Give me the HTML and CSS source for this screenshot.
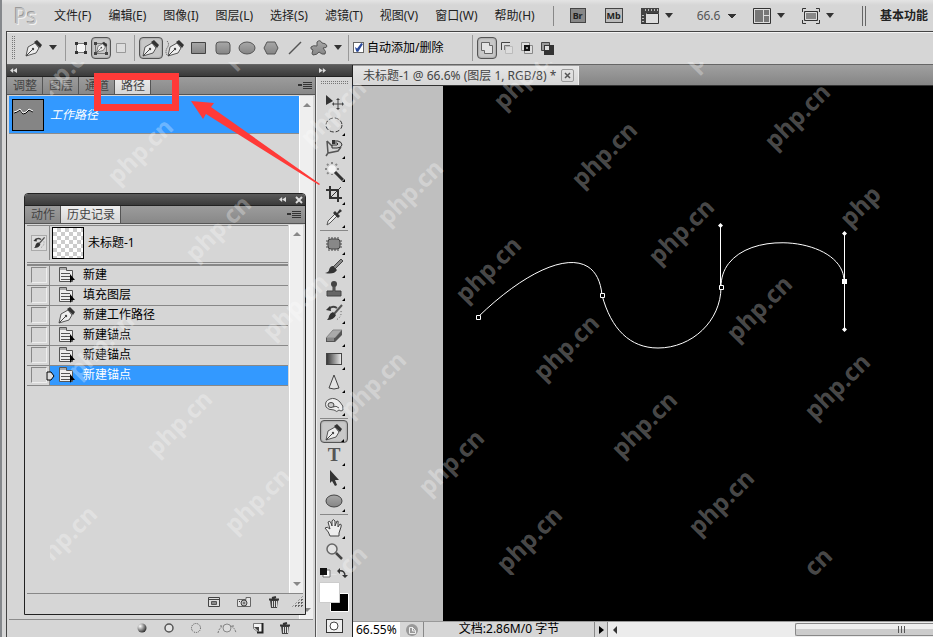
FILE: index.html
```html
<!DOCTYPE html>
<html lang="zh-CN">
<head>
    <meta charset="UTF-8">
    <meta name="viewport" content="width=device-width, initial-scale=1.0">
    <title>未标题-1</title>
    <link rel="stylesheet" href="styles.css">
</head>
<body>
    <!-- Shared icons -->
    <svg class="defs" aria-hidden="true">
        <defs>
            <linearGradient id="metal" x1="0" y1="0" x2="0" y2="1">
                <stop offset="0" stop-color="#a8a8a8"/>
                <stop offset="1" stop-color="#858585"/>
            </linearGradient>
            <linearGradient id="fade" x1="0" y1="0" x2="1" y2="0">
                <stop offset="0" stop-color="#333"/>
                <stop offset="1" stop-color="#eee"/>
            </linearGradient>
            <radialGradient id="ball" cx="0.3" cy="0.3" r="0.8">
                <stop offset="0" stop-color="#fff"/>
                <stop offset="1" stop-color="#222"/>
            </radialGradient>
        </defs>
        <symbol id="pen" viewBox="0 0 18 18">
            <path d="M1 17 L3 8 L10 4 L14 9 L11 14 Z" fill="#eee" stroke="#555"/>
            <path d="M1 17 L7 11" stroke="#444" fill="none"/>
            <circle cx="8" cy="10" r="1.2" fill="#444"/>
            <path d="M9 3 L12 1 L17 6 L15 9 Z" fill="#333"/>
        </symbol>
        <symbol id="brush" viewBox="0 0 20 20">
            <path d="M17 2 L19 4 L11 12 L9 10 Z" fill="#888" stroke="#444"/>
            <path d="M9 9 L13 13 Q10 18 1 16 Q5 15 5 13 Q6 9 9 9 Z" fill="#333"/>
        </symbol>
        <symbol id="history-brush" viewBox="0 0 20 20">
            <path d="M18 2 L10 11" stroke="#555" stroke-width="2"/>
            <path d="M9 9 L12 12 Q10 17 3 17 Q5 15 5 13 Q6 10 9 9 Z" fill="#333"/>
            <path d="M5 6 Q8 2 13 5" stroke="#444" stroke-width="2" fill="none"/>
            <path d="M2 7 L6 3 L7 8 Z" fill="#333"/>
            <path d="M17 8 Q18 14 12 17" stroke="#555" stroke-dasharray="1 2" fill="none"/>
        </symbol>
        <symbol id="state" viewBox="0 0 18 18">
            <path d="M1.500 1.500 H8.500 V4.500 H14.500 V15.500 H1.500 Z" fill="#eee" stroke="#555"/>
            <path d="M2 2 H8 V4 H2 Z" fill="#aaa"/>
            <path d="M3 7.500 H12 M3 10.500 H12 M3 13.500 H12" stroke="#555"/>
            <path d="M12 8 L17 14 L14 14 L12 17 Z" fill="#000"/>
        </symbol>
        <symbol id="trash" viewBox="0 0 12 12">
            <path d="M2 4 H10 L9 12 H3 Z" fill="#444"/>
            <path d="M4.500 5 V11 M6.500 5 V11 M8.500 5 V11" stroke="#ddd"/>
            <path d="M1 3.500 H11 M4 2 L8 1" stroke="#333" stroke-width="2"/>
        </symbol>
    </svg>

    <div class="app">
        <header class="menubar">
            <div class="logo">Ps</div>
            <nav class="menus">
                <button>文件(F)</button>
                <button>编辑(E)</button>
                <button>图像(I)</button>
                <button>图层(L)</button>
                <button>选择(S)</button>
                <button>滤镜(T)</button>
                <button>视图(V)</button>
                <button>窗口(W)</button>
                <button>帮助(H)</button>
            </nav>
            <div class="app-buttons">
                <button class="bridge">Br</button>
                <button class="mini">Mb</button>
                <button class="drop" aria-label="查看额外内容">
                    <svg width="18" height="16"><path d="M0 0 H18 V5 H5 V16 H0 Z" fill="#444"/><path d="M5.500 5.500 H17.500 V15.500 H1" fill="#ddd" stroke="#333"/><path d="M0 15 V5 H5 V15 Z" fill="#444"/><path d="M4.500 1 V3 M7.500 1 V3 M10.500 1 V3 M13.500 1 V3 M16.500 1 V3 M1 7.500 H3 M1 10.500 H3 M1 13.500 H3" stroke="#bbb"/></svg>
                </button>
                <select class="zoom-level" aria-label="缩放级别"><option>66.6</option></select>
                <button class="drop" aria-label="排列文档">
                    <svg width="18" height="16"><path d="M.5 .5 H17.500 V15.500 H.5 Z" fill="#ddd" stroke="#333"/><path d="M2 2 H10 V14 H2 Z M11 2 H16 V7 H11 Z M11 8 H16 V14 H11 Z" fill="#777"/></svg>
                </button>
                <button class="drop" aria-label="屏幕模式">
                    <svg width="18" height="16"><path d="M.5 4 V.5 H4 M14 .5 H17.500 V4 M17.500 12 V15.500 H14 M4 15.500 H.5 V12" fill="none" stroke="#333"/><path d="M2.500 3.500 H15.500 V12.500 H2.500 Z" fill="#888" stroke="#333"/><path d="M3.500 4.500 H14.500 V11.500 H3.500 Z" fill="none" stroke="#ddd"/></svg>
                </button>
            </div>
            <button class="workspace-name">基本功能</button>
        </header>

        <div class="frame">
            <div class="options">
                <span class="grip"></span>
                <button class="current-tool drop" aria-label="钢笔工具"><svg width="18" height="18"><use href="#pen"/></svg></button>
                <div class="modes">
                    <button aria-label="形状图层"><svg width="14" height="14"><path d="M2.500 2.500 H11.500 V11.500 H2.500 Z" fill="#f4f4f4" stroke="#777"/><path d="M1 1 H4 V4 H1 Z M10 1 H13 V4 H10 Z M1 10 H4 V13 H1 Z M10 10 H13 V13 H10 Z" fill="#333"/></svg></button>
                    <button class="on" aria-label="路径"><svg width="16" height="16"><path d="M2.500 3.500 H13.500 V13.500 H2.500 Z" fill="none" stroke="#777"/><path d="M1 2 H4 V5 H1 Z M1 12 H4 V15 H1 Z M12 12 H15 V15 H12 Z" fill="#444"/><use href="#pen" x="3" y="1" width="12" height="12"/></svg></button>
                    <button aria-label="填充像素"><svg width="12" height="12"><path d="M1.500 1.500 H10.500 V10.500 H1.500 Z" fill="#ddd" stroke="#999"/></svg></button>
                </div>
                <div class="shapes">
                    <button class="on" aria-label="钢笔"><svg width="18" height="18"><use href="#pen"/></svg></button>
                    <button aria-label="自由钢笔"><svg width="20" height="18"><use href="#pen" x="2" width="18" height="18"/><path d="M2 2 Q5 5 2 9 Q0 13 2 16" fill="none" stroke="#444" stroke-dasharray="1 1"/></svg></button>
                    <button aria-label="矩形"><svg width="16" height="16"><path d="M.5 2.500 H14.500 V13.500 H.5 Z" fill="url(#metal)" stroke="#444"/></svg></button>
                    <button aria-label="圆角矩形"><svg width="16" height="16"><rect x="1" y="2" width="14" height="12" rx="3" fill="url(#metal)" stroke="#555"/></svg></button>
                    <button aria-label="椭圆"><svg width="18" height="16"><ellipse cx="9" cy="8" rx="8" ry="6" fill="url(#metal)" stroke="#555"/></svg></button>
                    <button aria-label="多边形"><svg width="16" height="16"><path d="M4 2 H12 L15 8 L12 14 H4 L1 8 Z" fill="url(#metal)" stroke="#555"/></svg></button>
                    <button aria-label="直线"><svg width="16" height="16"><path d="M2 14 L14 2" stroke="#555" stroke-width="1.500"/></svg></button>
                    <button aria-label="自定形状"><svg width="20" height="18"><path d="M8 3 Q11 0 13 4 Q17 4 18 7 Q18 9 14 9 Q18 13 16 15 Q13 16 10 13 Q8 16 4 16 Q2 15 4 11 Q1 10 2 8 Q4 6 8 7 Z" fill="url(#metal)" stroke="#555"/></svg></button>
                    <i class="caret"></i>
                </div>
                <label class="auto"><input type="checkbox" checked> 自动添加/删除</label>
                <div class="modes combine">
                    <button class="on" aria-label="添加到路径区域"><svg width="14" height="14"><path d="M1.500 1.500 H9.500 V4.500 H12.500 V12.500 H4.500 V9.500 H1.500 Z" fill="#e4e4e4" stroke="#666"/></svg></button>
                    <button aria-label="从路径区域减去"><svg width="14" height="14"><path d="M1 9 V1 H10 V4 H5 V9 Z" fill="#ddd"/><path d="M1.500 9 V1.500 H10" fill="none" stroke="#444"/><path d="M4.500 9 V4.500 H10" fill="none" stroke="#777"/><path d="M5.500 5.500 H12.500 V12.500 H5.500 Z" fill="#ddd" stroke="#bbb"/></svg></button>
                    <button aria-label="交叉路径区域"><svg width="14" height="14"><path d="M1.500 1.500 H9.500 V9.500 H1.500 Z M4.500 4.500 H12.500 V12.500 H4.500 Z" fill="#ddd" stroke="#888"/><path d="M4 4 H10 V10 H4 Z" fill="#111"/><path d="M6 6 H8 V8 H6 Z" fill="#999"/></svg></button>
                    <button aria-label="重叠路径区域除外"><svg width="14" height="14"><path d="M1.500 1.500 H9.500 V9.500 H1.500 Z" fill="#999" stroke="#444"/><path d="M4 4 H14 V14 H4 Z" fill="#333"/><path d="M5 5 H9 V9 H5 Z" fill="#ddd"/></svg></button>
                </div>
            </div>

            <div class="workspace">
                <div class="docks">
                    <div class="dock-head"><span class="collapse left"></span><span class="collapse right"></span></div>
                    <div class="dock-body">
                        <section class="panel">
                            <div class="tabs">
                                <button>调整</button>
                                <button>图层</button>
                                <button>通道</button>
                                <button class="active">路径</button>
                                <i class="panel-menu"></i>
                            </div>
                            <div class="panel-body">
                                <div class="paths">
                                    <div class="path-row">
                                        <svg class="path-thumb" width="32" height="32"><path d="M1 12 L4 11 L7 9 L10 13 L13 12 L16 9 L20 11" transform="translate(0 1)" fill="none" stroke="#000"/><path d="M1 12 L4 11 L7 9 L10 13 L13 12 L16 9 L20 11" fill="none" stroke="#fff"/></svg>
                                        <em>工作路径</em>
                                    </div>
                                </div>
                                <div class="scroll"><i class="up"></i><i class="down"></i></div>
                            </div>
                            <footer class="path-actions">
                                <button aria-label="用前景色填充路径"><svg width="12" height="12"><circle cx="6" cy="6" r="4.500" fill="url(#ball)"/></svg></button>
                                <button aria-label="用画笔描边路径"><svg width="12" height="12"><circle cx="6" cy="6" r="4" fill="#e4e4e4" stroke="#555" stroke-width="1.500"/></svg></button>
                                <button aria-label="将路径作为选区载入"><svg width="12" height="12"><circle cx="6" cy="6" r="4.500" fill="none" stroke="#555" stroke-dasharray="1 1"/></svg></button>
                                <button aria-label="从选区生成工作路径"><svg width="20" height="12"><path d="M1 11 Q2 6 6 4 M14 4 Q18 6 19 11 M3 4 H17" fill="none" stroke="#777" stroke-dasharray="2 1"/><circle cx="10" cy="6" r="4" fill="#ddd" stroke="#888"/></svg></button>
                                <button aria-label="创建新路径"><svg width="12" height="12"><path d="M1.500 1.500 H10.500 V10.500 H6.500 L1.500 6.500 Z" fill="#f4f4f4" stroke="#777"/><path d="M10.500 1 V10.500 H5" fill="none" stroke="#222" stroke-width="2"/><path d="M2 5 H7 V10 Z" fill="#444"/></svg></button>
                                <button aria-label="删除路径"><svg width="12" height="12"><use href="#trash"/></svg></button>
                            </footer>
                        </section>

                        <aside class="toolbox">
                            <span class="tool-grip"></span>
                            <div class="tools">
                                <button class="single" aria-label="移动"><svg width="20" height="20"><path d="M2 3 L9 9 L2 13 Z" fill="#333"/><path d="M14 7 V17 M9 12 H19" stroke="#444"/><path d="M14 6 L16 8 H12 Z M14 18 L12 16 H16 Z M8 12 L10 10 V14 Z M20 12 L18 10 V14 Z" fill="#444"/></svg></button>
                                <button aria-label="椭圆选框"><svg width="20" height="20"><ellipse cx="10" cy="10" rx="8" ry="7" fill="none" stroke="#333" stroke-dasharray="4 2"/></svg></button>
                                <button aria-label="磁性套索"><svg width="20" height="20"><path d="M3 3 L8 8 M3 3 L4 15 L14 13 L17 9 M4 15 L2 18" fill="none" stroke="#555" stroke-width="1.500"/><path d="M9 3 H14 Q18 4 18 7 Q17 10 13 10 H8 V7 H13 Q15 6 13 5 H9 Z" fill="#ccc" stroke="#333"/><path d="M8 2 H11 V6 H8 Z" fill="#333"/></svg></button>
                                <button aria-label="魔棒"><svg width="20" height="20"><path d="M8 1 V14 M1 8 H15 M3 3 L13 13 M13 3 L3 13" stroke="#888" stroke-width="2" stroke-dasharray="2 1"/><circle cx="8" cy="8" r="4" fill="#f4f4f4"/><path d="M11 11 L19 19" stroke="#333" stroke-width="3"/></svg></button>
                                <button aria-label="裁剪"><svg width="20" height="20"><path d="M6 2 V14 H18 M2 6 H14 V18" fill="none" stroke="#333" stroke-width="2"/><path d="M7 13 L17 3" stroke="#333"/></svg></button>
                                <button aria-label="吸管"><svg width="20" height="20"><path d="M3 18 L4 14 L11 7 L13 9 L6 16 Z" fill="#eee" stroke="#555"/><path d="M9 6 L14 11 L16 9 L14 7 L18 4 L16 2 L13 6 L11 4 Z" fill="#333"/></svg></button>
                                <hr>
                                <button aria-label="污点修复画笔"><svg width="20" height="20"><path d="M5 3 V17 M8 3 V17 M11 3 V17 M14 3 V17 M2 7 H18 M2 10 H18 M2 13 H18" stroke="#444"/><rect x="4" y="5" width="12" height="10" rx="3" fill="#888" stroke="#444"/></svg></button>
                                <button aria-label="画笔"><svg width="20" height="20"><use href="#brush"/></svg></button>
                                <button aria-label="仿制图章"><svg width="20" height="20"><circle cx="10" cy="4" r="3" fill="#444"/><path d="M9 6 H11 V11 H17 V16 H3 V11 H9 Z" fill="#666" stroke="#444"/></svg></button>
                                <button aria-label="历史记录画笔"><svg width="20" height="20"><use href="#history-brush"/></svg></button>
                                <button aria-label="橡皮擦"><svg width="20" height="20"><path d="M2 12 L9 4 H18 L11 12 Z" fill="#aaa" stroke="#888"/><path d="M2 12 H11 L18 4 V9 L11 16 H2 Z" fill="#555"/><path d="M3 12 H10 V15 H3 Z" fill="#888"/></svg></button>
                                <button aria-label="渐变"><svg width="20" height="20"><rect x="2.500" y="4.500" width="15" height="11" fill="url(#fade)" stroke="#444"/></svg></button>
                                <button aria-label="锐化"><svg width="20" height="20"><path d="M10 3 L15 16 Q10 18 5 16 Z" fill="#e4e4e4" stroke="#444"/></svg></button>
                                <button aria-label="减淡"><svg width="20" height="20"><path d="M6 4 Q11 2 16 7 Q20 11 19 15 Q17 17 15 15 Q13 18 10 15 Q4 15 2 12 Q0 6 6 4 Z" fill="#eee" stroke="#555"/><ellipse cx="7" cy="10" rx="3" ry="2.500" fill="#ccc" stroke="#444"/><path d="M9 12 Q12 10 15 13" fill="none" stroke="#555"/></svg></button>
                                <hr>
                                <button class="on" aria-label="钢笔"><svg width="18" height="18"><use href="#pen"/></svg></button>
                                <button class="type" aria-label="文字">T</button>
                                <button aria-label="路径选择"><svg width="20" height="20"><path d="M6 2 L15 12 H11 L13 17 L11 18 L8 13 L6 15 Z" fill="#333"/></svg></button>
                                <button aria-label="椭圆"><svg width="20" height="20"><ellipse cx="10" cy="10" rx="8" ry="6" fill="url(#metal)" stroke="#444"/></svg></button>
                                <hr>
                                <button aria-label="抓手"><svg width="20" height="20"><path d="M6 18 Q5 14 1 10 Q3 8 6 11 L4 4 Q6 2 7 5 L8 8 V3 Q9 0 11 3 V8 L13 3 Q15 3 14 5 L14 9 L16 6 Q18 6 17 9 L15 15 V18 Z" fill="#eee" stroke="#444"/></svg></button>
                                <button class="single" aria-label="缩放"><svg width="20" height="20"><circle cx="8" cy="8" r="5" fill="#e4e4e4" stroke="#666" stroke-width="1.500"/><path d="M12 12 L18 18" stroke="#444" stroke-width="2.500"/></svg></button>
                            </div>
                            <svg class="swatches" width="30" height="47">
                                <path d="M4 3 H11 V10 H4 Z" fill="#fff" stroke="#777"/><path d="M1 1 H8 V8 H1 Z" fill="#111"/>
                                <path d="M20 4 Q26 3 26 9" fill="none" stroke="#333" stroke-width="1.500"/><path d="M18 4 L21 1 V7 Z M23 8 H29 L26 11 Z" fill="#333"/>
                                <path d="M11.500 26.500 H29.500 V44.500 H11.500 Z" fill="#000" stroke="#fff"/>
                                <path d="M.5 15.500 H20.500 V35.500 H.5 Z" fill="#fff" stroke="#ccc"/>
                            </svg>
                            <button class="quick-mask" aria-label="快速蒙版"><svg width="12" height="12"><circle cx="6" cy="6" r="4" fill="#fff" stroke="#444"/></svg></button>
                        </aside>
                    </div>
                </div>

                <main class="document">
                    <div class="doc-tabs">
                        <div class="doc-tab">未标题-1 @ 66.6% (图层 1, RGB/8) * <button class="doc-close" aria-label="关闭"><svg width="11" height="11"><path d="M3 3 L8 8 M8 3 L3 8" stroke="#555" stroke-width="1.500"/></svg></button></div>
                    </div>
                    <div class="pasteboard">
                        <svg class="canvas">
                            <g fill="none" stroke="#fff">
                                <path d="M35 231 C97 171 154 156 159 209 C168 243 187 262 215 262 C249 262 278 235 278 201 C278 139 401 147 401 195"/>
                                <path d="M277.500 140 V201 M401.500 148 V243"/>
                                <path d="M33.500 229.500 h4 v4 h-4 Z M157.500 207.500 h4 v4 h-4 Z M276.500 199.500 h4 v4 h-4 Z" fill="#000"/>
                            </g>
                            <path d="M399 193 h5 v5 h-5 Z M277.500 137 l2.500 2.500 l-2.500 2.500 l-2.500 -2.500 Z M401.500 145 l2.500 2.500 l-2.500 2.500 l-2.500 -2.500 Z M401.500 241 l2.500 2.500 l-2.500 2.500 l-2.500 -2.500 Z" fill="#fff"/>
                        </svg>
                    </div>
                    <div class="status">
                        <input class="status-zoom" type="text" value="66.55%" aria-label="缩放">
                        <span class="status-icon"><svg width="14" height="14"><circle cx="7" cy="7" r="6" fill="#999"/><path d="M4.500 4.500 H7.500 L10.500 7.500 V10.500 H4.500 Z M7.500 4 V8 H10" fill="none" stroke="#eee"/></svg></span>
                        <span class="status-text">文档:2.86M/0 字节</span>
                        <button class="status-more" aria-label="更多"></button>
                        <div class="hscroll"><i></i><span class="thumb"></span></div>
                    </div>
                </main>
            </div>
        </div>
    </div>

    <!-- Floating history panel -->
    <section class="history">
        <div class="history-head"><span class="collapse"></span><button aria-label="关闭"><svg width="8" height="8"><path d="M1 1 L7 7 M7 1 L1 7" stroke="#ddd" stroke-width="2"/></svg></button></div>
        <div class="tabs">
            <button>动作</button>
            <button class="active">历史记录</button>
            <i class="panel-menu"></i>
        </div>
        <div class="history-body">
            <div class="history-list">
                <div class="snapshot">
                    <span class="source"><svg width="16" height="16"><use href="#history-brush"/></svg></span>
                    <span class="snapshot-thumb"></span>
                    <span>未标题-1</span>
                </div>
                <ul class="states">
                    <li><span class="box"></span><button><svg width="18" height="18"><use href="#state"/></svg>新建</button></li>
                    <li><span class="box"></span><button><svg width="18" height="18"><use href="#state"/></svg>填充图层</button></li>
                    <li><span class="box"></span><button><svg width="18" height="18"><use href="#pen"/></svg>新建工作路径</button></li>
                    <li><span class="box"></span><button><svg width="18" height="18"><use href="#state"/></svg>新建锚点</button></li>
                    <li><span class="box"></span><button><svg width="18" height="18"><use href="#state"/></svg>新建锚点</button></li>
                    <li class="selected"><span class="box"></span><button><svg width="18" height="18"><use href="#state"/></svg>新建锚点</button><svg class="marker" width="9" height="10"><path d="M1 1 H5 L8 5 L5 9 H1 Z" fill="#ddd" stroke="#000"/></svg></li>
                </ul>
            </div>
            <div class="scroll"><i class="up"></i><i class="down"></i></div>
        </div>
        <footer class="history-actions">
            <button aria-label="从当前状态创建新文档"><svg width="12" height="12"><path d="M.5 1.500 H11.500 V10.500 H.5 Z" fill="#ddd" stroke="#444"/><path d="M1 3.500 H11" stroke="#444"/><path d="M3.500 5.500 H8.500 V8.500 H3.500 Z" fill="#888" stroke="#555"/></svg></button>
            <button aria-label="创建新快照"><svg width="14" height="12"><path d="M.5 3.500 H9 V1.500 H13.500 V10.500 H.5 Z" fill="#e4e4e4" stroke="#666"/><circle cx="7" cy="7" r="3" fill="#bbb" stroke="#444"/><path d="M2 5.500 H3 M7 6 V8" stroke="#333"/></svg></button>
            <button aria-label="删除"><svg width="12" height="12"><use href="#trash"/></svg></button>
            <span class="resize"></span>
        </footer>
    </section>

    <!-- Red callout -->
    <div class="callout"></div>
    <svg class="overlay" aria-hidden="true">
        <path d="M191 101 L214 103 L211 107 L320 184 L319 185 L206 114 L203 119 Z" fill="#ff3a38"/>
    </svg>

    <svg class="overlay watermark" aria-hidden="true">
        <g>
            <text transform="translate(64 75) rotate(-45)" y="6">php.cn</text>
            <text transform="translate(142 153) rotate(-45)" y="6">php.cn</text>
            <text transform="translate(220 230) rotate(-45)" y="6">php.cn</text>
            <text transform="translate(297 308) rotate(-45)" y="6">php.cn</text>
            <text transform="translate(375 386) rotate(-45)" y="6">php.cn</text>
            <text transform="translate(453 464) rotate(-45)" y="6">php.cn</text>
            <text transform="translate(531 541) rotate(-45)" y="6">php.cn</text>
            <text transform="translate(257 36) rotate(-45)" y="6">php.cn</text>
            <text transform="translate(335 114) rotate(-45)" y="6">php.cn</text>
            <text transform="translate(412 194) rotate(-45)" y="6">php.cn</text>
            <text transform="translate(490 271) rotate(-45)" y="6">php.cn</text>
            <text transform="translate(568 349) rotate(-45)" y="6">php.cn</text>
            <text transform="translate(646 426) rotate(-45)" y="6">php.cn</text>
            <text transform="translate(723 504) rotate(-45)" y="6">php.cn</text>
            <text transform="translate(801 582) rotate(-45)" y="6">php.cn</text>
            <text transform="translate(528 78) rotate(-45)" y="6">php.cn</text>
            <text transform="translate(606 156) rotate(-45)" y="6">php.cn</text>
            <text transform="translate(683 233) rotate(-45)" y="6">php.cn</text>
            <text transform="translate(761 310) rotate(-45)" y="6">php.cn</text>
            <text transform="translate(839 388) rotate(-45)" y="6">php.cn</text>
            <text transform="translate(720 40) rotate(-45)" y="6">php.cn</text>
            <text transform="translate(799 118) rotate(-45)" y="6">php.cn</text>
            <text transform="translate(862 208) rotate(-45)" y="6">php</text>
            <text transform="translate(103 347) rotate(-45)" y="6">php.cn</text>
            <text transform="translate(181 425) rotate(-45)" y="6">php.cn</text>
            <text transform="translate(259 502) rotate(-45)" y="6">php.cn</text>
            <text transform="translate(336 580) rotate(-45)" y="6">php.cn</text>
            <text transform="translate(66 540) rotate(-45)" y="6">php.cn</text>
        </g>
    </svg>
</body>
</html>
```
FILE: styles.css
```css
:root {
    --face: #d6d6d6;
    --line: #8c8c8c;
    --blue: #3399ff;
    --red: #ff3a38;
}

* {
    box-sizing: border-box;
}

body {
    margin: 0;
    font-family: "Noto Sans", "Noto Sans CJK SC", sans-serif;
    font-size: 12px;
    line-height: 16px;
    color: #222;
    background: var(--face);
    overflow: hidden;
}

button, input, select {
    font: inherit;
    color: inherit;
    margin: 0;
    padding: 0;
    border: none;
    background: none;
}

svg {
    display: block;
    flex: none;
}

.defs {
    position: absolute;
    width: 0;
    height: 0;
}

.app {
    display: flex;
    flex-direction: column;
    height: 100vh;
    border-left: 2px solid #85888c;
}

/* Menu bar */
.menubar {
    display: flex;
    align-items: center;
    height: 31px;
    flex: none;
    padding: 0 5px 0 12px;
    background: linear-gradient(#e4e4e4, var(--face) 5px);
    white-space: nowrap;
}

.logo {
    width: 40px;
    font-family: "Open Sans", sans-serif;
    font-size: 21px;
    line-height: 28px;
    color: #c4c4c4;
    text-shadow: 1px 1px 0 #f2f2f2, -1px -1px 0 #999;
}

.menus {
    display: flex;
    gap: 17px;
}

.app-buttons {
    display: flex;
    align-items: center;
    height: 20px;
    margin-left: 18px;
    padding-left: 16px;
    border-left: 1px solid #888;
}

.bridge, .mini {
    width: 16px;
    height: 15px;
    border: 1px solid #444;
    background: #888;
    font-size: 9px;
    font-weight: bold;
    line-height: 12px;
}

.mini {
    width: 18px;
    margin: 0 18px 0 19px;
    background: #bbb;
}

.drop {
    display: flex;
    align-items: center;
    gap: 6px;
}

.drop::after, .caret {
    content: "";
    width: 0;
    border: 4px solid transparent;
    border-top: 5px solid #333;
    border-bottom: 0;
}

.zoom-level {
    width: 39px;
    margin: 0 17px 0 24px;
    appearance: none;
    color: #555;
    background:
        linear-gradient(to bottom left, #333 50%, transparent 50%) 31px 6px / 4px 5px no-repeat,
        linear-gradient(to bottom right, #333 50%, transparent 50%) 35px 6px / 4px 5px no-repeat;
}

.app-buttons .drop + .drop {
    margin-left: 17px;
}

.workspace-name {
    height: 20px;
    margin-left: auto;
    padding-left: 14px;
    border-left: 4px double #666;
    font-weight: bold;
}

/* Options bar */
.frame {
    display: flex;
    flex-direction: column;
    flex: 1;
    min-height: 0;
    margin-left: 4px;
    border-left: 1px solid #444;
    border-top: 1px solid #444;
}

.options {
    display: flex;
    align-items: center;
    height: 33px;
    flex: none;
    padding: 0 0 2px 4px;
    border-top: 1px solid #f4f4f4;
    border-bottom: 1px solid #666;
    white-space: nowrap;
}

.options button {
    height: 22px;
}

.grip {
    width: 4px;
    height: 23px;
    background: conic-gradient(#777 25%, transparent 0) 0 0 / 2px 2px;
}

.current-tool {
    margin-left: 10px;
    padding-right: 8px;
}

.modes, .shapes {
    display: flex;
    align-items: center;
    height: 26px;
    border-left: 1px solid #999;
    padding-left: 5px;
}

.modes button, .shapes button {
    display: flex;
    align-items: center;
    justify-content: center;
    width: 20px;
}

.modes {
    padding-right: 3px;
}

.shapes button {
    width: 24px;
}

.shapes {
    padding-left: 4px;
    padding-right: 6px;
}

.options .on, .tools .on {
    border: 1px solid #555;
    border-radius: 4px;
    background: #c8c8c8;
    box-shadow: inset 0 0 2px #777;
}

.caret {
    margin-left: 3px;
}

.auto {
    display: flex;
    align-items: center;
    gap: 3px;
    width: 124px;
    height: 26px;
    padding-left: 4px;
    border-left: 1px solid #999;
    color: #000;
}

.auto input {
    width: 11px;
    height: 11px;
    appearance: none;
    border: 1px solid #666;
    background: #fff;
}

.auto input:checked::before {
    content: "";
    display: block;
    width: 9px;
    height: 9px;
    background: #2a4a9c;
    clip-path: polygon(10% 45%, 35% 60%, 80% 0, 100% 10%, 45% 100%, 25% 95%);
}

.combine {
    padding-left: 4px;
}

/* Docks */
.workspace {
    display: flex;
    flex: 1;
    min-height: 0;
}

.docks {
    display: flex;
    flex-direction: column;
    flex: none;
    width: 346px;
    border-right: 1px solid #222;
}

.dock-head, .history-head {
    display: flex;
    align-items: center;
    height: 12px;
    flex: none;
    background: linear-gradient(#5a5a5a, #3a3a3a);
    border-bottom: 1px solid #222;
}

.collapse {
    width: 7px;
    height: 5px;
    background: #ddd;
    clip-path: polygon(0 50%, 45% 0, 45% 50%, 100% 0, 100% 100%, 45% 50%, 45% 100%);
}

.dock-head .left {
    margin-left: 3px;
}

.dock-head .right {
    margin-left: auto;
    margin-right: 26px;
    transform: rotate(180deg);
}

.dock-body {
    display: flex;
    flex: 1;
    min-height: 0;
}

.panel {
    display: flex;
    flex-direction: column;
    flex: 1;
    border-right: 1px solid #555;
}

.tabs {
    display: flex;
    height: 18px;
    flex: none;
    background: linear-gradient(#9c9c9c, #888);
    border-bottom: 1px solid #555;
}

.tabs button {
    padding: 0 5px 0 6px;
    border-right: 1px solid #555;
    color: #444;
    line-height: 17px;
}

.tabs .active {
    background: linear-gradient(#eee, var(--face));
}

.panel-menu {
    width: 14px;
    height: 8px;
    margin: 5px 3px 0 auto;
    background:
        repeating-linear-gradient(#333 0 1px, transparent 1px 2px) right top / 9px 8px no-repeat,
        linear-gradient(#333, #333) 0 2px / 4px 2px no-repeat;
}

.panel-body {
    display: flex;
    flex: 1;
    margin: 1px 2px 0;
    border-bottom: 1px solid var(--line);
}

.paths {
    flex: 1;
}

.path-row {
    display: flex;
    align-items: center;
    gap: 6px;
    height: 38px;
    padding-left: 3px;
    background: var(--blue);
    border-bottom: 1px solid var(--line);
    color: #fff;
}

.path-thumb {
    border: 1px solid #000;
    background: #858585;
}

.scroll {
    display: flex;
    flex-direction: column;
    justify-content: space-between;
    align-items: center;
    width: 14px;
    padding: 7px 0;
    background: #efefef;
    border-left: 1px solid #fff;
}

.scroll i {
    border: 4px solid transparent;
    border-top: 0;
    border-bottom: 4px solid #888;
}

.scroll .down {
    border-top: 4px solid #888;
    border-bottom: 0;
}

.path-actions {
    display: flex;
    align-items: center;
    justify-content: flex-end;
    gap: 15px;
    height: 17px;
    flex: none;
    padding: 0 24px 1px 0;
}

/* Toolbox */
.toolbox {
    display: flex;
    flex-direction: column;
    align-items: center;
    width: 36px;
    padding: 4px 1px 0 0;
    border-left: 1px solid #eee;
}

.tool-grip {
    width: 28px;
    height: 4px;
    flex: none;
    background: conic-gradient(#777 25%, transparent 0) 0 0 / 2px 2px;
}

.tools {
    display: flex;
    flex-direction: column;
    margin-top: 5px;
}

.tools button {
    position: relative;
    display: flex;
    align-items: center;
    justify-content: center;
    width: 28px;
    height: 23px;
}

.tools button::after {
    content: "";
    position: absolute;
    right: 3px;
    bottom: 0;
    border-left: 3px solid transparent;
    border-bottom: 3px solid #000;
}

.tools .single::after {
    display: none;
}

.tools hr {
    width: 28px;
    margin: 2px 0 1px;
    border: 0;
    border-top: 1px solid #888;
}

.tools .type {
    font-family: "Liberation Serif", serif;
    font-size: 19px;
    font-weight: bold;
    color: #555;
}

.swatches {
    margin-top: 5px;
}

.quick-mask {
    display: flex;
    align-items: center;
    justify-content: center;
    width: 17px;
    height: 14px;
    margin-top: 5px;
    flex: none;
    border: 1px solid #333;
    background: #eee;
}

/* Document window */
.document {
    display: flex;
    flex-direction: column;
    flex: 1;
    min-width: 0;
}

.doc-tabs {
    display: flex;
    height: 21px;
    flex: none;
    padding-top: 1px;
    background: linear-gradient(#a0a0a0, #858585);
    border-bottom: 1px solid #333;
}

.doc-tab {
    display: flex;
    align-items: center;
    gap: 5px;
    padding: 0 4px 0 10px;
    background: linear-gradient(#e6e6e6, var(--face));
    border-right: 1px solid #eee;
    color: #444;
    white-space: nowrap;
}

.doc-close {
    border: 1px solid #999;
    border-radius: 2px;
}

.pasteboard {
    display: flex;
    flex: 1;
    min-height: 0;
    padding-left: 90px;
    background: #bfbfbf;
}

.canvas {
    flex: 1;
    width: 100%;
    height: 100%;
    background: #000;
}

.status {
    display: flex;
    height: 16px;
    flex: none;
    border-top: 1px solid #999;
    color: #000;
    line-height: 14px;
}

.status-zoom {
    width: 47px;
    padding-left: 3px;
    background: #fff;
}

.status-icon {
    display: flex;
    align-items: center;
    justify-content: center;
    width: 24px;
    border-right: 1px solid #888;
}

.status-text {
    width: 170px;
    text-align: center;
}

.status-more {
    width: 14px;
    border: 1px solid #888;
    border-top: 0;
    border-bottom: 0;
}

.status-more::before {
    content: "";
    display: block;
    width: 0;
    margin-left: 4px;
    border: 4px solid transparent;
    border-left: 5px solid #000;
    border-right: 0;
}

.hscroll {
    display: flex;
    align-items: center;
    flex: 1;
    padding-left: 5px;
    background: #ececec;
}

.hscroll i {
    border: 4px solid transparent;
    border-right: 4px solid #333;
    border-left: 0;
}

.thumb {
    width: 43%;
    height: 13px;
    margin-left: auto;
    border: 1px solid #888;
    border-right: 0;
    border-radius: 2px 0 0 2px;
    background:
        repeating-linear-gradient(90deg, #555 0 1px, transparent 1px 3px) 102px 2px / 8px 7px no-repeat,
        linear-gradient(#eee 45%, #ccc 50%);
}

/* History panel floats over the docks */
.history {
    position: absolute;
    left: 24px;
    top: 193px;
    display: flex;
    flex-direction: column;
    width: 282px;
    height: 422px;
    border: 1px solid #222;
    border-radius: 4px 4px 0 0;
    background: var(--face);
    overflow: hidden;
    color: #000;
}

.history-head {
    justify-content: flex-end;
    gap: 9px;
    padding-right: 2px;
}

.history .panel-menu {
    margin-right: 4px;
}

.history-body {
    display: flex;
    flex: 1;
    margin: 1px 2px 0;
    border-bottom: 1px solid #888;
}

.history-list {
    flex: 1;
}

.history .scroll {
    margin-left: 1px;
}

.snapshot {
    display: flex;
    align-items: center;
    height: 38px;
    padding-bottom: 2px;
    border-top: 1px solid #888;
    border-bottom: 1px solid #888;
}

.source {
    display: flex;
    align-items: center;
    width: 23px;
    height: 100%;
    padding-left: 4px;
    border-right: 1px solid #888;
}

.source svg {
    border: 1px solid #aaa;
    background: #ddd;
}

.snapshot-thumb {
    width: 32px;
    height: 32px;
    margin: 0 4px 0 2px;
    border: 1px solid #000;
    background: conic-gradient(#ccc 25%, #fff 0 50%, #ccc 0 75%, #fff 0) 0 0 / 8px 8px;
}

.states {
    margin: 1px 0 0;
    padding: 0;
    border-top: 2px solid #888;
    list-style: none;
}

.states li {
    position: relative;
    display: flex;
    height: 20px;
    border-bottom: 1px solid #888;
}

.box {
    width: 16px;
    height: 16px;
    margin: 1px 2px 0 4px;
    border: 1px solid #888;
    border-right-color: #eee;
    border-bottom-color: #eee;
}

.states button {
    display: flex;
    align-items: center;
    gap: 7px;
    flex: 1;
    padding: 0 0 2px 8px;
    border-left: 1px solid #888;
}

.states .selected button {
    background: var(--blue);
    color: #fff;
}

.marker {
    position: absolute;
    left: 19px;
    top: 5px;
}

.history-actions {
    display: flex;
    align-items: center;
    justify-content: flex-end;
    gap: 17px;
    height: 20px;
    flex: none;
    padding: 0 2px 4px 0;
}

.resize {
    width: 12px;
    height: 12px;
    margin-left: -6px;
    background: conic-gradient(#666 25%, transparent 0) 0 0 / 3px 3px;
    clip-path: polygon(100% 0, 100% 100%, 0 100%);
}

/* Annotations */
.callout {
    position: absolute;
    left: 94px;
    top: 73px;
    width: 85px;
    height: 38px;
    border: 7px solid var(--red);
}

.overlay {
    position: absolute;
    left: 0;
    top: 0;
    width: 100%;
    height: 100%;
    pointer-events: none;
}

.watermark {
    clip-path: polygon(50px 62px, 883px 62px, 883px 575px, 50px 575px);
    fill: #fff;
    fill-opacity: 0.3;
    font-family: "Open Sans", sans-serif;
    font-size: 24px;
    font-weight: 700;
    text-anchor: middle;
}
```
